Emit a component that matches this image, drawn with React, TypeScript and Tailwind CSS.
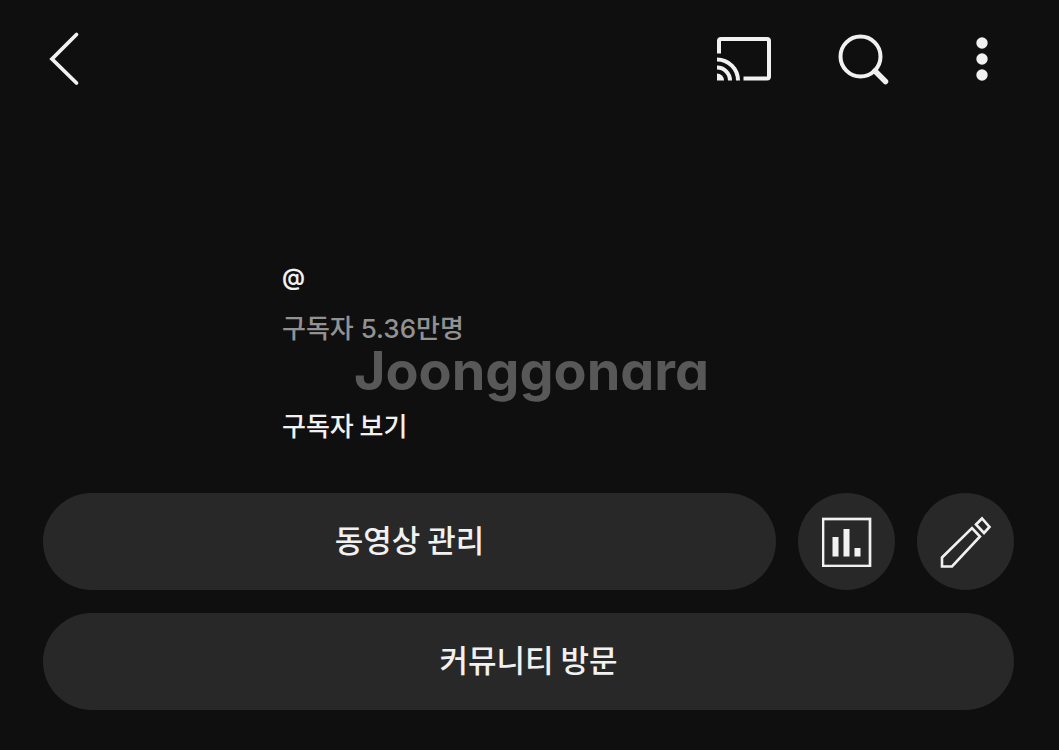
const focus = 'focus-visible:outline-2 focus-visible:outline-white';

function BackIcon() {
  return (
    <svg viewBox="0 0 40 60" className="h-[60px] w-10" fill="none" stroke="currentColor" strokeWidth="3.8" strokeLinecap="round" aria-hidden="true">
      <path d="M33.500 5.500 9 30l24.500 24" />
    </svg>
  );
}

function CastIcon() {
  return (
    <svg viewBox="0 0 60 60" className="size-[60px]" fill="none" stroke="currentColor" strokeWidth="4" aria-hidden="true">
      <path d="M5 24.500V12Q5 10 7 10H53Q55 10 55 12V47.500Q55 49.500 53 49.500H29.500" />
      <path d="M3 30.500A21 21 0 0 1 24 51.500M3 38.500A13 13 0 0 1 16 51.500" />
      <path d="M3 44.500a7 7 0 0 1 7 7H3z" fill="currentColor" stroke="none" />
    </svg>
  );
}

function SearchIcon() {
  return (
    <svg viewBox="0 0 60 60" className="size-[60px]" fill="none" stroke="currentColor" aria-hidden="true">
      <circle cx="27.500" cy="27.500" r="20" strokeWidth="4" />
      <path d="m42 42 10.500 10.500" strokeWidth="5.500" strokeLinecap="round" />
    </svg>
  );
}

function MoreIcon() {
  return (
    <svg viewBox="0 0 20 60" className="h-[60px] w-5" fill="currentColor" aria-hidden="true">
      <circle cx="10" cy="14" r="5.700" />
      <circle cx="10" cy="30" r="5.700" />
      <circle cx="10" cy="46" r="5.700" />
    </svg>
  );
}

function StatsIcon() {
  return (
    <svg viewBox="0 0 50 50" className="size-[50px]" fill="currentColor" aria-hidden="true">
      <rect x="1" y="2" width="47" height="47" fill="none" stroke="currentColor" strokeWidth="2.700" />
      <path d="M10.500 20h6V39.500H10.500zM21.500 12h6V39.500H21.500zM32.500 31h6V39.500H32.500z" />
    </svg>
  );
}

function PencilIcon() {
  return (
    <svg viewBox="0 0 52 52" className="size-[52px]" fill="none" stroke="currentColor" strokeWidth="2.600" aria-hidden="true">
      <path d="M2 41.500 32 12 40 20.500 12 50.500H2z" />
      <path d="M36 8.500 42 2.500 49.500 11 44 17z" />
    </svg>
  );
}

export default function App() {
  return (
    <div className="relative flex min-h-screen flex-col bg-[#0f0f0f] font-['Inter','Noto_Sans_CJK_KR',sans-serif] text-[#f1f1f1]">
      <header className="flex items-center justify-between pt-[29px] pr-[67px] pl-[43px]">
        <button type="button" aria-label="뒤로" className={focus}><BackIcon /></button>
        <div className="flex items-center">
          <button type="button" aria-label="전송" className={`mr-[59px] ${focus}`}><CastIcon /></button>
          <button type="button" aria-label="검색" className={`mr-[79px] ${focus}`}><SearchIcon /></button>
          <button type="button" aria-label="더보기" className={focus}><MoreIcon /></button>
        </div>
      </header>

      <main className="flex flex-col pt-[168px] pr-[45px] pl-[43px]">
        <section className="flex flex-col items-start pl-[239px] text-[26px] leading-10">
          <p className="text-[23px] font-semibold">@</p>
          <p className="mt-3 font-medium text-[#929292]">구독자 5.36만명</p>
          <a href="#subscribers" className={`mt-14 font-['Noto_Sans_CJK_KR',sans-serif] font-medium ${focus}`}>구독자 보기</a>
        </section>

        <div className="mt-12 flex flex-col gap-[23px] font-['Noto_Sans_CJK_KR',sans-serif] text-[31px] font-medium">
          <div className="flex gap-[22px]">
            <button type="button" className={`h-[97px] flex-1 rounded-full bg-[#282828] pb-1 ${focus}`}>동영상 관리</button>
            <button type="button" aria-label="통계" className={`flex size-[97px] items-center justify-center rounded-full bg-[#282828] ${focus}`}><StatsIcon /></button>
            <button type="button" aria-label="수정" className={`flex size-[97px] items-center justify-center rounded-full bg-[#282828] ${focus}`}><PencilIcon /></button>
          </div>
          <button type="button" className={`h-[97px] w-full rounded-full bg-[#282828] pb-1 ${focus}`}>커뮤니티 방문</button>
        </div>
      </main>

      <p className="pointer-events-none absolute inset-x-0 top-[333px] pl-1 text-center text-[54px] leading-[76px] font-bold text-[#585858] [font-feature-settings:'cv11']">Joonggonara</p>
    </div>
  );
}
